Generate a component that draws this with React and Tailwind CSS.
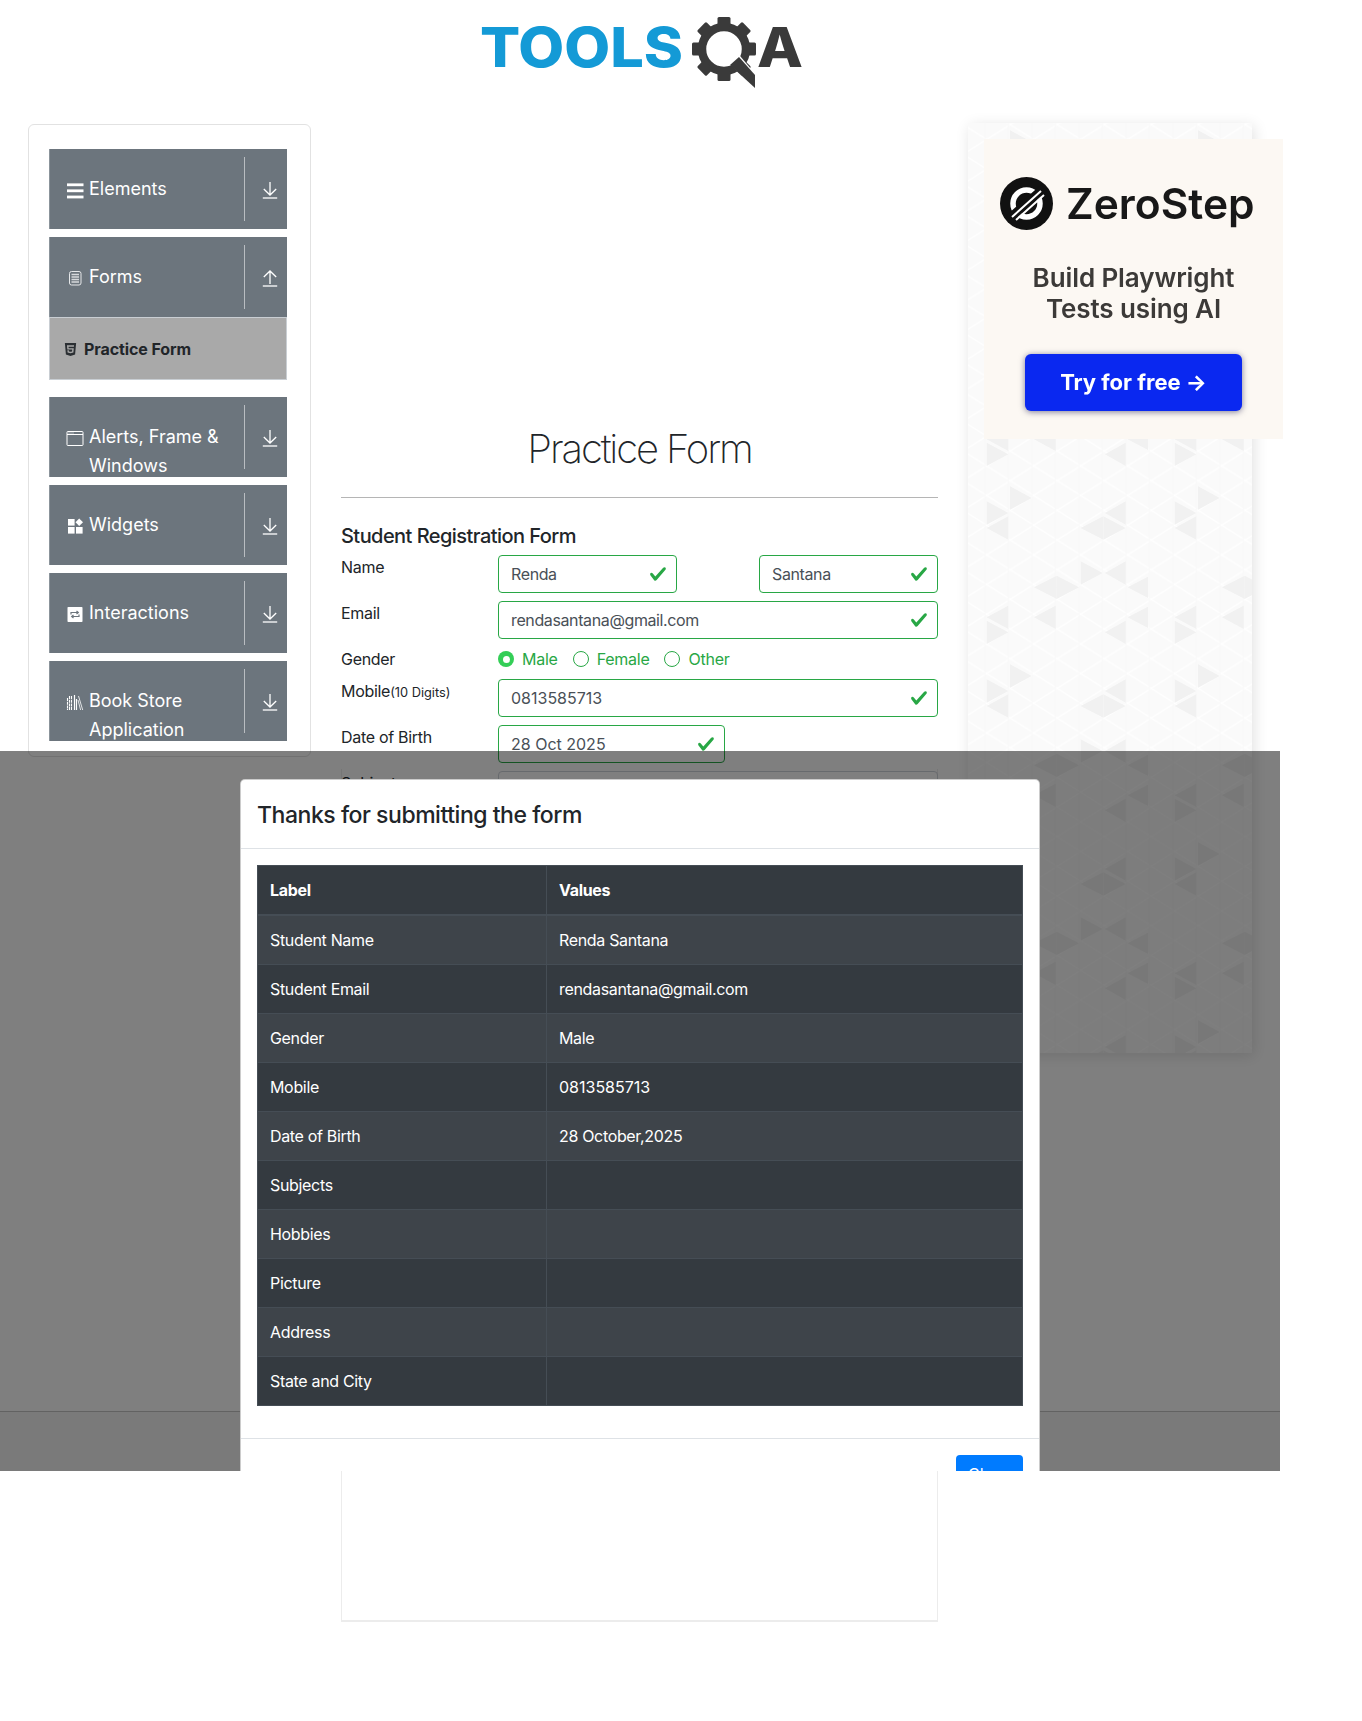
import React from "react";
import { FaHtml5 } from "react-icons/fa";

const font = { fontFamily: "Inter, 'Liberation Sans', sans-serif" };

function Arrow({ up }) {
  return (
    <svg width="16" height="20" viewBox="0 0 16 20" fill="none" stroke="#fff" strokeWidth="1.3">
      {up ? (
        <path d="M8 16V3M1.8 9L8 3l6.2 6" />
      ) : (
        <path d="M8 2v13M1.8 9L8 15l6.2-6" />
      )}
      <path d="M.8 18h14.4" />
    </svg>
  );
}

const icons = {
  bars: (
    <svg width="18" height="18" viewBox="0 0 18 18" fill="#fff">
      <rect x="1" y="2.4" width="16.5" height="2.8" />
      <rect x="1" y="8.4" width="16.5" height="2.8" />
      <rect x="1" y="14.6" width="16.5" height="2.8" />
    </svg>
  ),
  forms: (
    <svg width="18" height="18" viewBox="0 0 18 18" fill="none">
      <rect x="3.5" y="2.5" width="11.5" height="13.5" rx="2" stroke="#e5e7e9" strokeWidth="1" />
      <path d="M5.5 5.5h7.5M5.5 8h7.5M5.5 10.5h7.5M5.5 13h7.5" stroke="#d6d9dc" strokeWidth="1.3" />
    </svg>
  ),
  window: (
    <svg width="18" height="18" viewBox="0 0 18 18" fill="none" stroke="#fff" strokeWidth="1">
      <rect x="1" y="2.5" width="16" height="14" rx="0.8" />
      <path d="M1 5.5h16" />
      <path d="M2.5 4h1M4.5 4h1M6.5 4h1" strokeWidth="0.9" />
    </svg>
  ),
  widgets: (
    <svg width="18" height="18" viewBox="0 0 18 18" fill="#fff">
      <rect x="2" y="2" width="6.6" height="6.6" />
      <rect x="2" y="10" width="6.6" height="6.6" />
      <rect x="10" y="10" width="6.6" height="6.6" />
      <path d="M13.2 1.5l3.8 3.7-3.8 3.7-3.7-3.7z" />
    </svg>
  ),
  interactions: (
    <svg width="18" height="18" viewBox="0 0 18 18">
      <rect x="1.5" y="2" width="15" height="15" rx="0.8" fill="#fff" />
      <path d="M5 9.5V7.5h7M10.5 6l1.8 1.5-1.8 1.5M13 9.5v2H6M7.5 13l-1.8-1.5L7.5 10" fill="none" stroke="#6c757d" strokeWidth="1.2" />
    </svg>
  ),
  books: (
    <svg width="18" height="18" viewBox="0 0 18 18" fill="none" stroke="#fff">
      <path d="M1.5 5v12M3.5 3v14M5.5 3v14" strokeWidth="1.1" strokeDasharray="3 .7" />
      <path d="M8.5 2v15M10.5 6v11" strokeWidth="1.2" />
      <path d="M12.5 3l4.2 14M12 7l2.6 10" strokeWidth="0.8" />
    </svg>
  ),
};

function NavItem({ icon, label, up }) {
  return (
    <div className="flex h-[80px] w-[238px] overflow-hidden border-l border-[#8b949b] bg-[#6c757d]">
      <div className="flex w-[194px] items-start pl-[16px] pt-[25px] text-[18px] leading-[29px] text-white">
        <span className="mt-[1px] flex h-[29px] w-[18px] shrink-0 items-center">{icons[icon]}</span>
        <span className="ml-[5px]">{label}</span>
      </div>
      <div className="my-2 w-px bg-[#b9bdc1]" />
      <div className="flex flex-1 justify-center pl-[7px] pt-[31px]">
        <Arrow up={up} />
      </div>
    </div>
  );
}

function Sidebar() {
  return (
    <div className="ml-[28px] flex h-[633px] w-[283px] shrink-0 flex-col rounded-md border border-[#e2e2e2] pl-5 pt-6">
      <NavItem icon="bars" label="Elements" />
      <div className="mt-2">
        <NavItem icon="forms" label="Forms" up />
      </div>
      <div className="flex h-[63px] w-[238px] items-center gap-[6px] border border-[#c9ced3] bg-[#a9a9a9] pl-[13px] pt-[1px] text-[16px] font-bold tracking-[-0.1px] text-[#212529]">
        <FaHtml5 className="h-[15px] w-[15px] text-[#2b2f33]" />
        <span>Practice Form</span>
      </div>
      <div className="mt-[17px] flex flex-col gap-2">
        <NavItem icon="window" label="Alerts, Frame & Windows" />
        <NavItem icon="widgets" label="Widgets" />
        <NavItem icon="interactions" label="Interactions" />
        <NavItem icon="books" label="Book Store Application" />
      </div>
    </div>
  );
}

function Check() {
  return (
    <svg width="18" height="18" viewBox="0 0 8 8" fill="#28a745">
      <path d="M2.3 6.73L.6 4.53c-.4-1.04.46-1.4 1.1-.8l1.1 1.4 3.4-3.8c.6-.63 1.6-.27 1.2.7l-4 4.6c-.43.5-.8.4-1.1.1z" />
    </svg>
  );
}

function Field({ value, className, digits }) {
  return (
    <div className={`flex h-[38px] items-center justify-between rounded-[4px] border border-[#28a745] pl-3 pr-[9px] text-base text-[#495057] ${className}`}>
      <span className={digits ? "tracking-[0px]" : "tracking-[-0.38px]"}>{value}</span>
      <Check />
    </div>
  );
}

function Radio({ label, checked }) {
  return (
    <div className="flex h-6 items-center gap-2 text-[#28a745]">
      {checked ? (
        <span className="flex h-4 w-4 items-center justify-center rounded-full bg-[#34ce57]">
          <span className="h-[7px] w-[7px] rounded-full bg-white" />
        </span>
      ) : (
        <span className="h-4 w-4 rounded-full border border-[#28a745]" />
      )}
      <span className="tracking-[-0.25px]">{label}</span>
    </div>
  );
}

function Row({ label, children, className = "" }) {
  return (
    <div className={`flex ${className}`}>
      <div className="w-[157px] shrink-0 text-base leading-6 tracking-[-0.3px] text-[#212529]">{label}</div>
      {children}
    </div>
  );
}

function FormColumn() {
  return (
    <div className="ml-[30px] w-[597px] shrink-0">
      <h1 className="pt-[301px] text-center text-[40px] font-extralight leading-[48px] tracking-[-2.1px] text-[#212529]">Practice Form</h1>
      <div className="mt-[24px] h-px bg-[#b5b5b5]" />
      <h5 className="mt-[23px] text-[20px] font-medium leading-[30px] tracking-[-0.55px] text-[#212529]">Student Registration Form</h5>
      <div className="mt-1 flex flex-col gap-2">
        <Row label="Name">
          <Field value="Renda" className="w-[179px]" />
          <Field value="Santana" className="ml-[82px] w-[179px]" />
        </Row>
        <Row label="Email">
          <Field value="rendasantana@gmail.com" className="flex-1" />
        </Row>
        <Row label="Gender">
          <div className="flex gap-[15px]">
            <Radio label="Male" checked />
            <Radio label="Female" />
            <Radio label="Other" />
          </div>
        </Row>
        <Row label={<span>Mobile<span className="text-[12.8px] tracking-normal">(10 Digits)</span></span>}>
          <Field value="0813585713" digits className="flex-1" />
        </Row>
        <Row label="Date of Birth">
          <Field value="28 Oct 2025" digits className="w-[227px]" />
        </Row>
        <Row label="Subjects">
          <div className="h-[38px] flex-1 rounded-[4px] border border-[#ced4da]" />
        </Row>
      </div>
      <div className="mt-[-40px] h-[853px] border-b-2 border-l border-r border-[#ececec]" />
    </div>
  );
}

const dark = [
  "M150 175V245L215 210Z", "M80 220V290L145 255Z", "M145 265V335L80 300Z",
  "M430 265V335L362 300Z", "M430 265V335L497 300Z", "M497 220V290L435 255Z",
  "M645 220V290L710 255Z", "M710 265V335L645 300Z", "M362 400V470L428 435Z",
  "M497 400V470L435 435Z", "M290 443V513L222 478Z", "M290 443V513L357 478Z",
  "M570 443V513L503 478Z", "M145 533V603L80 568Z", "M287 533V603L222 568Z",
  "M570 533V603L503 568Z", "M80 578V648L145 613Z", "M497 578V648L435 613Z",
  "M645 578V648L710 613Z", "M145 -1V69L80 34Z", "M287 -1V69L222 34Z",
  "M570 -1V69L503 34Z", "M710 -1V69L645 34Z", "M80 44V114L145 79Z",
  "M497 44V114L435 79Z", "M645 44V114L710 79Z", "M710 533V603L645 568Z",
];

function AdPattern() {
  return (
    <svg className="absolute inset-0 h-full w-full" aria-hidden="true">
      <defs>
        <pattern id="lat" width="47" height="29.67" patternUnits="userSpaceOnUse" patternTransform="translate(18.67 127)">
          <path d="M0 8.2L23.5 23 47 8.2M0 8.2L23.5 -6.6 47 8.2M0 37.9L23.5 23 47 37.9" fill="none" stroke="#ffffff" strokeWidth="1.2" />
          <path d="M21.7 0V30M45.2 0V30" stroke="#f8f8f8" strokeWidth="1" />
        </pattern>
        <pattern id="tri" width="564" height="534" patternUnits="userSpaceOnUse" patternTransform="translate(-8 127) scale(.33333)">
          {dark.map((d) => (
            <path key={d} d={d} fill="#f1f1f1" />
          ))}
          {dark.map((d) => (
            <path key={d + "b"} d={d} transform="translate(564 0)" fill="#f1f1f1" />
          ))}
        </pattern>
      </defs>
      <rect width="100%" height="100%" fill="#fafafa" />
      <rect width="100%" height="100%" fill="url(#lat)" />
      <rect width="100%" height="100%" fill="url(#tri)" />
    </svg>
  );
}

function AdColumn() {
  return (
    <div className="relative ml-[30px] h-[930px] w-[284px] shrink-0 -translate-y-px shadow-[2px_3px_14px_rgba(0,0,0,0.12)]">
      <AdPattern />
      <div className="absolute left-[16px] top-[16px] flex h-[300px] w-[299px] flex-col items-center bg-[#fcf8f3] blur-[0.5px]">
        <div className="mt-[38px] flex items-center gap-[13px] self-start pl-[16px]">
          <svg width="53" height="53" viewBox="0 0 53 53">
            <circle cx="26.5" cy="26.5" r="26.5" fill="#111" />
            <circle cx="26.5" cy="26.5" r="13.5" fill="none" stroke="#fff" strokeWidth="5.5" />
            <path d="M9 42L44 11" stroke="#111" strokeWidth="9" />
            <path d="M12 40L41 14M16 43L44 18" stroke="#fff" strokeWidth="2" />
          </svg>
          <span className="text-[42.5px] font-[560] leading-[53px] text-[#181818]">ZeroStep</span>
        </div>
        <div className="mt-[32px] text-center text-[26px] font-[560] leading-[31px] tracking-[-0.1px] text-[#3c3a38]">
          Build Playwright
          <br />
          Tests using AI
        </div>
        <div className="mt-[30px] flex h-[57px] w-[217px] items-center justify-center rounded-md bg-[#0a28f0] text-[22px] font-bold text-white shadow-[0_1px_6px_rgba(0,0,60,0.5)]">
          Try for free →
        </div>
      </div>
    </div>
  );
}

function Logo() {
  const teeth = [0, 45, 90, 135, 180, 225, 270, 315];
  return (
    <svg width="330" height="100" viewBox="0 0 330 100" className="blur-[0.3px]">
      <text
        x="1"
        y="67"
        textLength="203"
        lengthAdjust="spacingAndGlyphs"
        fontFamily="Inter"
        fontWeight="800"
        fontSize="55"
        fill="#149ad6"
      >
        TOOLS
      </text>
      <g transform="translate(245 49)">
        <circle r="22" fill="none" stroke="#3a3a3a" strokeWidth="8.5" />
        {teeth.map((a) => (
          <rect key={a} x="-6.5" y="-32" width="13" height="10" rx="1.5" fill="#3a3a3a" transform={`rotate(${a})`} />
        ))}
      </g>
      <path d="M246 58L256 50 278 76 276 90Z" fill="#fff" />
      <path d="M260 57L276 75 276 88 251 65Z" fill="#3a3a3a" />
      <text x="278" y="67" fontFamily="Inter" fontWeight="800" fontSize="55" fill="#3a3a3a" textLength="46" lengthAdjust="spacingAndGlyphs">
        A
      </text>
    </svg>
  );
}

const rows = [
  ["Student Name", "Renda Santana"],
  ["Student Email", "rendasantana@gmail.com"],
  ["Gender", "Male"],
  ["Mobile", "0813585713"],
  ["Date of Birth", "28 October,2025"],
  ["Subjects", ""],
  ["Hobbies", ""],
  ["Picture", ""],
  ["Address", ""],
  ["State and City", ""],
];

function Modal() {
  return (
    <div className="absolute left-0 top-[751px] h-[720px] w-[1280px] overflow-hidden bg-black/50">
      <div className="mx-auto mt-[28px] w-[800px] rounded-[5px] border border-black/20 bg-white">
        <div className="flex h-[69px] items-center border-b border-[#dee2e6] px-4 pt-[1px] text-[23px] font-medium leading-9 tracking-[-0.46px] text-[#212529]">
          Thanks for submitting the form
        </div>
        <div className="p-4">
          <table className="mb-4 w-full table-fixed border-collapse text-base leading-6 tracking-[-0.33px] text-white">
            <colgroup>
              <col className="w-[289px]" />
              <col />
            </colgroup>
            <thead>
              <tr className="bg-[#343a40]">
                <th className="border border-b-2 border-[#454d55] p-3 text-left font-bold">Label</th>
                <th className="border border-b-2 border-[#454d55] p-3 text-left font-bold">Values</th>
              </tr>
            </thead>
            <tbody>
              {rows.map(([a, b], i) => (
                <tr key={a} className={i % 2 === 0 ? "bg-[#3e444a]" : "bg-[#343a40]"}>
                  <td className="h-[49px] border border-[#454d55] p-3">{a}</td>
                  <td className={`h-[49px] border border-[#454d55] p-3 ${a === "Mobile" ? "tracking-[0px]" : ""}`}>{b}</td>
                </tr>
              ))}
            </tbody>
          </table>
        </div>
        <div className="flex justify-end border-t border-[#dee2e6] p-4">
          <button className="h-[38px] rounded-[4px] bg-[#007bff] px-3 text-base text-white">Close</button>
        </div>
      </div>
    </div>
  );
}

export default function App() {
  return (
    <div className="relative h-[1721px] w-full overflow-hidden bg-white" style={font}>
      <div className="flex h-[124px] w-[1280px] justify-center">
        <div className="pl-[8px]">
          <Logo />
        </div>
      </div>
      <div className="flex h-[1287px] w-[1280px]">
        <Sidebar />
        <FormColumn />
        <AdColumn />
      </div>
      <div className="h-[60px] w-[1280px] border-t border-[#c4c4c4] bg-[#f4f4f4]" />
      <Modal />
    </div>
  );
}
